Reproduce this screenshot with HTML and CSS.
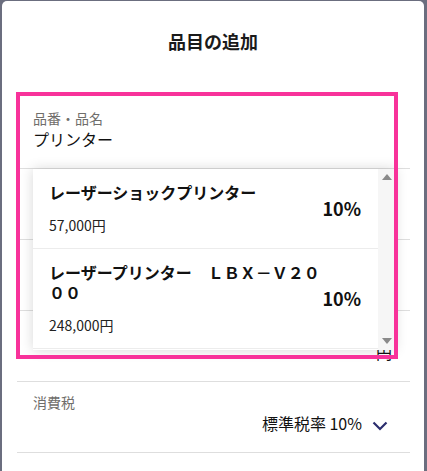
FILE: index.html
```html
<!DOCTYPE html>
<html lang="ja">
<head>
<meta charset="utf-8">
<title>品目の追加</title>
<link rel="stylesheet" href="styles.css">
</head>
<body>
<div class="modal">
  <div class="header"><h1 class="title">品目の追加</h1></div>
  <div class="form">
    <div class="row">
      <div class="label">品番・品名</div>
      <div class="value">プリンター</div>
    </div>
    <div class="row"></div>
    <div class="row"></div>
    <div class="row">
      <div class="label">&nbsp;</div>
      <div class="value value-right value-price">円</div>
    </div>
    <div class="row">
      <div class="label">消費税</div>
      <div class="value value-right value-select">
        <span>標準税率 10%</span>
        <svg class="chevron" width="16" height="10" viewBox="0 0 16 10"><polyline points="1.5,1.5 8,8 14.5,1.5" fill="none" stroke="#2b2d6e" stroke-width="2.2"/></svg>
      </div>
    </div>
  </div>

  <div class="dropdown">
    <ul class="options">
      <li class="option">
        <div class="opt-info">
          <div class="opt-name">レーザーショックプリンター</div>
          <div class="opt-price">57,000円</div>
        </div>
        <div class="opt-tax">10%</div>
      </li>
      <li class="option">
        <div class="opt-info">
          <div class="opt-name">レーザープリンター　ＬＢＸ－Ｖ２０００</div>
          <div class="opt-price">248,000円</div>
        </div>
        <div class="opt-tax">10%</div>
      </li>
    </ul>
    <div class="scrollbar">
      <span class="arrow arrow-up"></span>
      <span class="arrow arrow-down"></span>
    </div>
  </div>

  <div class="highlight"></div>
</div>
</body>
</html>
```

FILE: styles.css
```css
html, body {
  margin: 0;
  padding: 0;
}
body {
  background: #6b6e7f;
  font-family: "Noto Sans CJK JP", "Noto Sans", sans-serif;
  color: #111;
  height: 471px;
  overflow: hidden;
}
.modal {
  position: relative;
  margin: 1px 3px 0 2px;
  height: 470px;
  background: #fff;
  border-radius: 5px 5px 0 0;
}
.header {
  height: 97px;
  padding-top: 28px;
  box-sizing: border-box;
}
.title {
  margin: 0;
  text-align: center;
  font-size: 18px;
  line-height: 24px;
  font-weight: 700;
  color: #1a1a1a;
}
.form {
  margin: 0 14px 0 15px;
}
.row {
  height: 71px;
  box-sizing: border-box;
  padding: 10px 22px 0 16px;
  border-bottom: 1px solid #dedede;
}
.label {
  font-size: 14px;
  line-height: 20px;
  color: #706e6b;
}
.value {
  font-size: 16px;
  line-height: 22px;
  color: #111;
}
.value-right {
  display: flex;
  justify-content: flex-end;
  align-items: center;
}
.value-price {
  margin-right: -4px;
}
.value-select {
  gap: 10px;
}
.chevron {
  margin-top: 5px;
}

.dropdown {
  position: absolute;
  left: 31px;
  top: 168px;
  width: 362px;
  height: 181px;
  display: flex;
  background: #fff;
  box-shadow: 0 0 12px rgba(0, 0, 0, 0.16);
  overflow: hidden;
}
.options {
  list-style: none;
  margin: 0;
  padding: 0;
  flex: 1;
  min-width: 0;
}
.option {
  display: flex;
  align-items: center;
  padding: 13px 17px 14px 16px;
  border-bottom: 1px solid #ececec;
}
.opt-info {
  width: 273px;
  flex: none;
}
.opt-name {
  font-size: 16px;
  line-height: 20px;
  font-weight: 700;
  color: #111;
}
.opt-price {
  margin-top: 14px;
  font-size: 14px;
  line-height: 18px;
  color: #222;
}
.opt-tax {
  margin-left: auto;
  font-size: 18px;
  font-weight: 700;
  line-height: 20px;
  color: #111;
}
.scrollbar {
  width: 17px;
  flex: none;
  background: #f6f6f6;
  display: flex;
  flex-direction: column;
  justify-content: space-between;
  align-items: center;
  padding: 5px 0 6px;
  box-sizing: border-box;
}
.arrow {
  width: 0;
  height: 0;
  border-left: 5px solid transparent;
  border-right: 5px solid transparent;
}
.arrow-up {
  border-bottom: 6px solid #8a8a8a;
}
.arrow-down {
  border-top: 6px solid #8a8a8a;
}

.highlight {
  position: absolute;
  left: 14px;
  top: 91px;
  width: 382px;
  height: 267px;
  box-sizing: border-box;
  border: 4px solid #f8329a;
  pointer-events: none;
}
```
